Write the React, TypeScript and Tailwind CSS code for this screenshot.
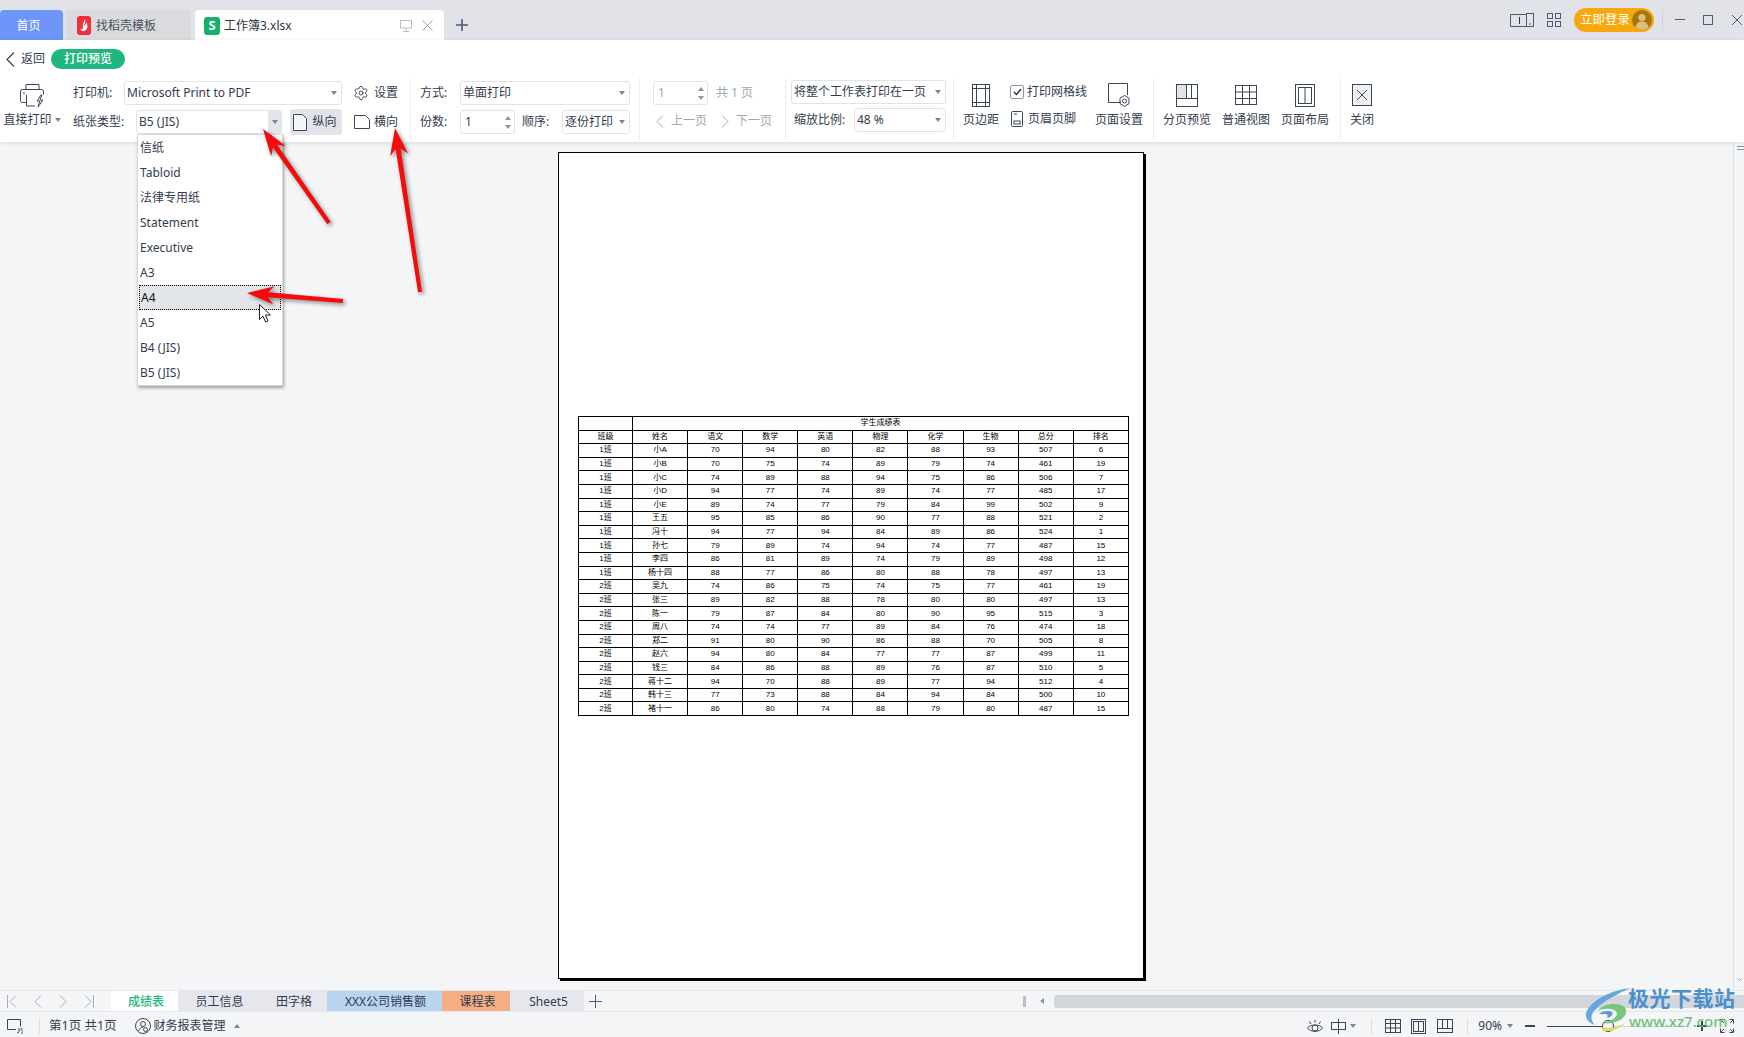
import { ChevronDown, Settings } from "lucide-react";
import type { ReactNode } from "react";

const font = '"Noto Sans", "Noto Sans CJK SC", sans-serif';

const rows = [
  ["1班", "小A", "70", "94", "80", "82", "88", "93", "507", "6"],
  ["1班", "小B", "70", "75", "74", "89", "79", "74", "461", "19"],
  ["1班", "小C", "74", "89", "88", "94", "75", "86", "506", "7"],
  ["1班", "小D", "94", "77", "74", "89", "74", "77", "485", "17"],
  ["1班", "小E", "89", "74", "77", "79", "84", "99", "502", "9"],
  ["1班", "王五", "95", "85", "86", "90", "77", "88", "521", "2"],
  ["1班", "冯十", "94", "77", "94", "84", "89", "86", "524", "1"],
  ["1班", "孙七", "79", "89", "74", "94", "74", "77", "487", "15"],
  ["1班", "李四", "86", "81", "89", "74", "79", "89", "498", "12"],
  ["1班", "杨十四", "88", "77", "86", "80", "88", "78", "497", "13"],
  ["2班", "吴九", "74", "86", "75", "74", "75", "77", "461", "19"],
  ["2班", "张三", "89", "82", "88", "78", "80", "80", "497", "13"],
  ["2班", "陈一", "79", "87", "84", "80", "90", "95", "515", "3"],
  ["2班", "周八", "74", "74", "77", "89", "84", "76", "474", "18"],
  ["2班", "郑二", "91", "80", "90", "86", "88", "70", "505", "8"],
  ["2班", "赵六", "94", "80", "84", "77", "77", "87", "499", "11"],
  ["2班", "钱三", "84", "86", "88", "89", "76", "87", "510", "5"],
  ["2班", "蒋十二", "94", "70", "88", "89", "77", "94", "512", "4"],
  ["2班", "韩十三", "77", "73", "88", "84", "94", "84", "500", "10"],
  ["2班", "褚十一", "86", "80", "74", "88", "79", "80", "487", "15"],
];

const headers = ["班级", "姓名", "语文", "数学", "英语", "物理", "化学", "生物", "总分", "排名"];
const paperSizes = ["信纸", "Tabloid", "法律专用纸", "Statement", "Executive", "A3", "A4", "A5", "B4 (JIS)", "B5 (JIS)"];

function Caret({ className = "" }: { className?: string }) {
  return <span className={`inline-block h-0 w-0 border-x-[3px] border-t-[4px] border-x-transparent border-t-[#7b8494] ${className}`} />;
}

function Select({ width, text, muted }: { width: string; text: string; muted?: boolean }) {
  return (
    <div className={`flex h-[24px] items-center justify-between rounded-[3px] border border-[#dfe2e7] bg-white pl-[2px] pr-[4px] ${width}`}>
      <span className={`whitespace-nowrap ${muted ? "text-[#a0a6b1]" : ""}`}>{text}</span>
      <Caret />
    </div>
  );
}

function Spinner({ width, text, muted }: { width: string; text: string; muted?: boolean }) {
  return (
    <div className={`flex h-[24px] items-center justify-between rounded-[3px] border border-[#dfe2e7] bg-white pl-[4px] pr-[3px] ${width} ${muted ? "text-[#a0a6b1]" : ""}`}>
      <span>{text}</span>
      <span className="flex flex-col gap-[5px]">
        <span className="h-0 w-0 border-x-[3px] border-b-[4px] border-x-transparent border-b-[#8e95a1]" />
        <span className="h-0 w-0 border-x-[3px] border-t-[4px] border-x-transparent border-t-[#8e95a1]" />
      </span>
    </div>
  );
}

function Divider() {
  return <div className="mt-[2px] h-[62px] w-px shrink-0 bg-[#edeef1]" />;
}

function Line({ size = 24, w, h, children }: { size?: number; w?: number; h?: number; children: ReactNode }) {
  return (
    <svg width={w ?? size} height={h ?? size} viewBox={`0 0 ${w ?? size} ${h ?? size}`} fill="none" stroke="#3b4558" strokeWidth="1">
      {children}
    </svg>
  );
}

function BigTool({ width, label, icon }: { width: string; label: string; icon: ReactNode }) {
  return (
    <div className={`flex shrink-0 flex-col items-center pt-[7px] ${width}`}>
      <div className="flex h-[24px] items-center justify-center">{icon}</div>
      <span className="mt-[3px] whitespace-nowrap leading-[20px]">{label}</span>
    </div>
  );
}

function Arrow({ x1, y1, x2, y2 }: { x1: number; y1: number; x2: number; y2: number }) {
  const len = Math.hypot(x2 - x1, y2 - y1);
  const ux = (x2 - x1) / len;
  const uy = (y2 - y1) / len;
  const nx = -uy;
  const ny = ux;
  const bx = x2 - ux * 27;
  const by = y2 - uy * 27;
  const nk = x2 - ux * 21;
  const nl = y2 - uy * 21;
  const pts = [
    [x2, y2],
    [bx + nx * 9, by + ny * 9],
    [nk + nx * 2.5, nl + ny * 2.5],
    [x1 + nx * 2, y1 + ny * 2],
    [x1 - nx * 2, y1 - ny * 2],
    [nk - nx * 2.5, nl - ny * 2.5],
    [bx - nx * 9, by - ny * 9],
  ];
  return <polygon points={pts.map((p) => p.join(",")).join(" ")} fill="#f40c0c" />;
}

function SheetTab({ width, label, className }: { width: string; label: string; className: string }) {
  return <div className={`flex h-full shrink-0 items-center justify-center pt-[1px] ${width} ${className}`}>{label}</div>;
}

export default function App() {
  return (
    <div className="relative flex h-[1037px] w-[1744px] flex-col overflow-hidden bg-[#f4f5f7] text-[12px] text-[#333c4e]" style={{ fontFamily: font }}>
      {/* title bar */}
      <div className="flex h-[40px] shrink-0 items-end bg-[#e1e3e8]">
        <div className="flex h-[30px] w-[63px] items-center justify-center rounded-t-[4px] bg-[#6c96f8] pr-[6px] pt-[1px] text-white">首页</div>
        <div className="ml-[3px] flex h-[30px] w-[125px] items-center rounded-t-[4px] bg-[#d9dbdf] pl-[11px] pt-[1px]">
          <span className="flex h-[19px] w-[14px] items-center justify-center rounded-[3px] bg-[#ef2f3c]">
            <svg width="10" height="13" viewBox="0 0 10 13" fill="#fff"><path d="M6 0c1 3-1 5-1 7 1-1 2-2 2-4 2 3 2 6 0 8-2 2-5 1-6-1 2 1 3 0 3-2C3 6 5 3 6 0z" /></svg>
          </span>
          <span className="ml-[5px] text-[#4a5160]">找稻壳模板</span>
        </div>
        <div className="ml-[4px] flex h-[30px] w-[249px] items-center rounded-t-[4px] bg-white pl-[9px] pt-[1px]">
          <span className="flex h-[18px] w-[16px] items-center justify-center rounded-[3px] bg-[#17b26a] text-[13px] font-bold leading-none text-white">S</span>
          <span className="ml-[4px] text-[#2b3242]">工作簿3.xlsx</span>
          <span className="ml-auto mr-[11px] flex items-center gap-[10px]">
            <svg width="12" height="13" viewBox="0 0 12 13" fill="none" stroke="#b9bec7"><rect x="0.5" y="1.5" width="11" height="7.5" /><path d="M6 9v3M3 12.5h6" /></svg>
            <svg width="11" height="11" viewBox="0 0 11 11" fill="none" stroke="#9aa0ab"><path d="M.5.5l10 10M10.5.5l-10 10" /></svg>
          </span>
        </div>
        <div className="flex h-[30px] w-[36px] items-center justify-center">
          <svg width="12" height="12" viewBox="0 0 12 12" stroke="#4e5a76" strokeWidth="1.6"><path d="M6 0v12M0 6h12" /></svg>
        </div>
        <div className="ml-auto flex h-[40px] items-center">
          <svg width="24" height="14" viewBox="0 0 24 14" fill="none" stroke="#4e5a76">
            <path d="M16 1.5H.5v12H16" /><rect x="16.5" y=".5" width="7" height="13" /><path d="M19 11h2" /><path d="M9.5 4v7" stroke="#333" />
          </svg>
          <svg className="ml-[13px]" width="14" height="14" viewBox="0 0 14 14" fill="none" stroke="#4e5a76">
            <rect x=".5" y=".5" width="5" height="5" /><rect x="8.5" y=".5" width="5" height="5" /><rect x=".5" y="8.5" width="5" height="5" /><rect x="8.5" y="8.5" width="5" height="5" />
          </svg>
          <div className="ml-[13px] flex h-[24px] w-[80px] items-center justify-between rounded-full bg-[#f7a80c] pl-[6px] pr-[2px] text-[12.5px] text-white">
            <span>立即登录</span>
            <svg width="20" height="20" viewBox="0 0 20 20">
              <circle cx="10" cy="10" r="10" fill="#a87405" />
              <circle cx="10" cy="7.5" r="3.6" fill="#dcbf83" />
              <path d="M3.5 17c.8-4 3.5-5.5 6.5-5.5s5.700 1.500 6.500 5.500c-3 3.500-10 3.500-13 0z" fill="#dcbf83" />
            </svg>
          </div>
          <div className="ml-[8px] h-[20px] w-px bg-[#cfd2d8]" />
          <svg className="ml-[12px]" width="10" height="10" viewBox="0 0 10 10" stroke="#4e5a76"><path d="M0 4.500h10" /></svg>
          <svg className="ml-[18px]" width="10" height="10" viewBox="0 0 10 10" fill="none" stroke="#4e5a76"><rect x=".5" y=".5" width="9" height="9" /></svg>
          <svg className="ml-[19px] mr-[2px]" width="10" height="10" viewBox="0 0 10 10" stroke="#4e5a76"><path d="M0 0l10 10M10 0L0 10" /></svg>
        </div>
      </div>

      {/* ribbon */}
      <div className="z-10 flex h-[102px] shrink-0 flex-col bg-white shadow-[0_1px_4px_rgba(0,0,0,0.12)]">
        <div className="flex h-[36px] shrink-0 items-center pl-[6px] pt-[2px]">
          <svg width="9" height="15" viewBox="0 0 9 15" fill="none" stroke="#3b4558" strokeWidth="1.2"><path d="M8 .5L1 7.500l7 7" /></svg>
          <span className="ml-[6px]">返回</span>
          <span className="ml-[6px] flex h-[20px] w-[74px] items-center justify-center rounded-full bg-[#1fb77e] font-medium text-white">打印预览</span>
        </div>
        <div className="flex h-[66px] items-start">
          <div className="flex w-[64px] shrink-0 flex-col items-center pt-[6px]">
            <svg width="26" height="26" viewBox="0 0 26 26" fill="none" stroke="#3b4558">
              <path d="M7 7V2.500h13V7" /><path d="M7 20.500H3.500a2 2 0 0 1-2-2v-9a2 2 0 0 1 2-2h19a2 2 0 0 1 2 2v3" /><path d="M7.500 13v11H16" /><path d="M4 11h2" /><path d="M22 13l-4 6h3l-2 6 5-7h-3l2-5z" strokeLinejoin="round" />
            </svg>
            <span className="mt-[2px] flex items-center gap-[3px] whitespace-nowrap leading-[20px]">直接打印<Caret /></span>
          </div>
          <div className="flex w-[346px] shrink-0 flex-col gap-[5px] pl-[9px] pt-[5px]">
            <div className="flex h-[24px] items-center">
              <span className="w-[51px] shrink-0">打印机:</span>
              <Select width="w-[218px]" text="Microsoft Print to PDF" />
              <Settings size={16} strokeWidth={1.4} className="ml-[11px] text-[#3b4558]" />
              <span className="ml-[5px]">设置</span>
            </div>
            <div className="flex h-[24px] items-center">
              <span className="w-[63px] shrink-0">纸张类型:</span>
              <div className="flex h-[24px] w-[146px] items-center justify-between rounded-[3px] border border-[#dfe2e7] bg-white pl-[2px]">
                <span>B5 (JIS)</span>
                <span className="flex h-full w-[13px] items-center justify-center bg-[#e2e5ea]"><Caret /></span>
              </div>
              <div className="ml-[8px] flex h-[26px] w-[52px] items-center justify-center gap-[5px] rounded-[3px] bg-[#e1e4e9] pr-[2px]">
                <svg width="14" height="17" viewBox="0 0 14 17" fill="#f4f5f7" stroke="#3b4558"><path d="M.5.500h9l4 4v12H.5z" /></svg>
                <span>纵向</span>
              </div>
              <svg className="ml-[12px]" width="16" height="14" viewBox="0 0 16 14" fill="none" stroke="#3b4558"><path d="M.5.500h11l4 4v9H.5z" /></svg>
              <span className="ml-[4px]">横向</span>
            </div>
          </div>
          <Divider />
          <div className="flex w-[228px] shrink-0 flex-col gap-[5px] pl-[9px] pt-[5px]">
            <div className="flex h-[24px] items-center">
              <span className="w-[40px] shrink-0">方式:</span>
              <Select width="w-[170px]" text="单面打印" />
            </div>
            <div className="flex h-[24px] items-center">
              <span className="w-[40px] shrink-0">份数:</span>
              <Spinner width="w-[55px]" text="1" />
              <span className="ml-[7px] w-[40px] shrink-0">顺序:</span>
              <Select width="w-[68px]" text="逐份打印" />
            </div>
          </div>
          <Divider />
          <div className="flex w-[145px] shrink-0 flex-col gap-[4px] pl-[13px] pt-[5px] text-[#a0a6b1]">
            <div className="flex h-[24px] items-center">
              <Spinner width="w-[55px]" text="1" muted />
              <span className="ml-[8px] whitespace-nowrap">共 1 页</span>
            </div>
            <div className="flex h-[24px] items-center pl-[3px]">
              <svg width="8" height="13" viewBox="0 0 8 13" fill="none" stroke="#a0a6b1"><path d="M7 .500l-6 6 6 6" /></svg>
              <span className="ml-[7px]">上一页</span>
              <svg className="ml-[14px]" width="8" height="13" viewBox="0 0 8 13" fill="none" stroke="#a0a6b1"><path d="M1 .500l6 6-6 6" /></svg>
              <span className="ml-[7px]">下一页</span>
            </div>
          </div>
          <Divider />
          <div className="flex w-[167px] shrink-0 flex-col gap-[4px] pl-[5px] pt-[4px]">
            <Select width="w-[155px]" text="将整个工作表打印在一页" />
            <div className="flex h-[24px] items-center">
              <span className="ml-[3px] w-[60px] shrink-0">缩放比例:</span>
              <Select width="w-[92px]" text="48 %" />
            </div>
          </div>
          <Divider />
          <BigTool
            width="w-[54px]"
            label="页边距"
            icon={
              <Line w={18} h={23}>
                <rect x=".5" y=".5" width="17" height="22" /><path d="M4.500 0v23M13.500 0v23M0 4.500h18M0 18.500h18" />
              </Line>
            }
          />
          <div className="ml-[2px] flex w-[85px] shrink-0 flex-col gap-[9px] pt-[7px]">
            <div className="flex h-[18px] items-center">
              <span className="flex h-[14px] w-[14px] items-center justify-center rounded-[2px] border border-[#8f96a3] bg-white">
                <svg width="9" height="8" viewBox="0 0 9 8" fill="none" stroke="#2b3242" strokeWidth="1.500"><path d="M1 4l2.500 2.500L8 1" /></svg>
              </span>
              <span className="ml-[3px] whitespace-nowrap">打印网格线</span>
            </div>
            <div className="flex h-[18px] items-center">
              <svg width="14" height="16" viewBox="0 0 14 16" fill="none" stroke="#3b4558"><rect x="1.500" y=".5" width="11" height="15" rx="1" /><path d="M4 3h3" /><rect x="4" y="10" width="6" height="3" /></svg>
              <span className="ml-[4px] whitespace-nowrap">页眉页脚</span>
            </div>
          </div>
          <BigTool
            width="w-[58px] pr-[10px]"
            label="页面设置"
            icon={
              <Line w={24} h={26}>
                <path d="M14 20.500H1.500V1.500h19V13" /><circle cx="17.500" cy="19" r="2" /><path d="M17.500 13.500l4.500 2.700v5.500l-4.500 2.700-4.500-2.700v-5.500z" />
              </Line>
            }
          />
          <Divider />
          <BigTool
            width="w-[66px]"
            label="分页预览"
            icon={
              <Line w={22} h={23}>
                <rect x=".5" y=".5" width="21" height="22" /><rect x="1" y="1" width="9" height="13" fill="#e2e4e8" stroke="none" /><path d="M10.500 0v14.500M15.500 0v14.500M0 14.500h22" />
              </Line>
            }
          />
          <BigTool
            width="w-[44px] ml-[4px]"
            label="普通视图"
            icon={
              <Line w={22} h={20}>
                <rect x=".5" y=".5" width="21" height="19" /><path d="M7.500 0v20M14.500 0v20M0 7h22M0 13.500h22" />
              </Line>
            }
          />
          <BigTool
            width="w-[60px] ml-[7px]"
            label="页面布局"
            icon={
              <Line w={20} h={23}>
                <rect x=".5" y=".5" width="19" height="22" /><rect x="3.500" y="3.500" width="13" height="16" /><path d="M10 3v17" />
              </Line>
            }
          />
          <div className="w-[5px] shrink-0" />
          <Divider />
          <BigTool
            width="w-[42px]"
            label="关闭"
            icon={
              <Line w={20} h={22}>
                <rect x=".5" y=".5" width="19" height="21" fill="#eef0f3" /><path d="M5 6l10 10M15 6L5 16" />
              </Line>
            }
          />
        </div>
      </div>

      {/* sheet preview */}
      <div className="flex min-h-0 flex-1">
        <div className="flex-1 pl-[558px] pt-[10px]">
          <div className="h-[827px] w-[586px] border border-black bg-white pl-[19px] pt-[263px] shadow-[2px_2px_0_#000]">
            <table className="w-[551px] table-fixed border-collapse border-[1.5px] border-black text-center text-[8px] leading-none text-black" style={{ fontFamily: '"Liberation Sans", "Noto Sans CJK SC", sans-serif' }}>
              <colgroup>
                {headers.map((h, i) => (
                  <col key={h} className={i === 0 ? "w-[54px]" : "w-[55px]"} />
                ))}
              </colgroup>
              <tbody>
                <tr className="h-[13.6px]">
                  <td className="border border-black p-0" />
                  <td colSpan={9} className="border border-black p-0">学生成绩表</td>
                </tr>
                <tr className="h-[13.6px]">
                  {headers.map((h) => (
                    <td key={h} className="border border-black p-0">{h}</td>
                  ))}
                </tr>
                {rows.map((row) => (
                  <tr key={row[1]} className="h-[13.6px]">
                    {row.map((cell, i) => (
                      <td key={i} className="border border-black p-0">{cell}</td>
                    ))}
                  </tr>
                ))}
              </tbody>
            </table>
          </div>
        </div>
        <div className="relative w-[11px] shrink-0 border-l border-[#dfe1e6]">
          <div className="ml-[3px] mt-[4px] h-[4px] w-[8px] border-y border-[#8b93a1]" />
          <ChevronDown size={9} className="absolute bottom-[6px] left-[1px] text-[#8b93a1]" />
        </div>
      </div>

      {/* sheet tabs */}
      <div className="flex h-[22px] shrink-0 items-center border-y border-[#e5e7ec] bg-[#f4f5f7]">
        <div className="flex w-[111px] shrink-0 items-center gap-[17px] pl-[7px]">
          <svg width="10" height="13" viewBox="0 0 10 13" fill="none" stroke="#a8adb7"><path d="M.5 0v13M9 .5l-6 6 6 6" /></svg>
          <svg width="8" height="13" viewBox="0 0 8 13" fill="none" stroke="#a8adb7"><path d="M7 .5l-6 6 6 6" /></svg>
          <svg width="8" height="13" viewBox="0 0 8 13" fill="none" stroke="#a8adb7"><path d="M1 .5l6 6-6 6" /></svg>
          <svg width="10" height="13" viewBox="0 0 10 13" fill="none" stroke="#a8adb7"><path d="M9.500 0v13M1 .5l6 6-6 6" /></svg>
        </div>
        <SheetTab width="w-[67px] pl-[3px]" label="成绩表" className="bg-white font-medium text-[#1fb77e]" />
        <SheetTab width="w-[83px]" label="员工信息" className="bg-[#e5e7ec]" />
        <SheetTab width="w-[66px]" label="田字格" className="bg-[#e5e7ec]" />
        <SheetTab width="w-[115px] pl-[2px]" label="XXX公司销售额" className="bg-[#b8d4ee]" />
        <SheetTab width="w-[68px] pl-[3px]" label="课程表" className="bg-[#f4ae82]" />
        <SheetTab width="w-[74px] pl-[3px]" label="Sheet5" className="bg-[#e5e7ec]" />
        <div className="flex w-[22px] justify-center">
          <svg width="13" height="13" viewBox="0 0 13 13" stroke="#4e5a76"><path d="M6.500 0v13M0 6.500h13" /></svg>
        </div>
        <div className="ml-[417px] h-[11px] w-[3px] bg-[#b9bec7]" />
        <span className="ml-[14px] h-0 w-0 border-y-[3px] border-r-[4px] border-y-transparent border-r-[#8b93a1]" />
        <div className="ml-[10px] h-[13px] flex-1 rounded-l-[3px] bg-[#d3d6dd]" />
      </div>

      {/* status bar */}
      <div className="flex h-[25px] shrink-0 items-center bg-[#f4f5f7] pt-[3px]">
        <svg className="ml-[7px]" width="16" height="16" viewBox="0 0 16 16" fill="none" stroke="#3b4558"><path d="M9 11.500H.5V1.500h13v7" /><path d="M10 15c1.500 0 2-.5 2-2v-3M15.500 10.500c-2-.5-2 2 0 2.500s0 3-1.500 2" /></svg>
        <div className="ml-[16px] h-[16px] w-px bg-[#dcdfe4]" />
        <span className="ml-[9px] whitespace-nowrap text-[12.5px]">第1页 共1页</span>
        <svg className="ml-[18px]" width="16" height="18" viewBox="0 0 16 18" fill="none" stroke="#3b4558"><circle cx="8" cy="9" r="7.500" /><circle cx="8" cy="7" r="2.500" /><path d="M3.500 14c1-2.500 2.500-3.500 4.500-3.500" /><circle cx="10.500" cy="12.500" r="2" /></svg>
        <span className="ml-[3px] whitespace-nowrap">财务报表管理</span>
        <span className="ml-[8px] h-0 w-0 border-x-[3px] border-b-[4px] border-x-transparent border-b-[#7b8494]" />

        <svg className="ml-auto" width="16" height="15" viewBox="0 0 16 15" fill="none" stroke="#3b4558"><path d="M.5 9C3 5 13 5 15.500 9 13 13.500 3 13.500.5 9z" /><circle cx="8" cy="9" r="3" /><path d="M8 1v2.500M2.500 2.500l1.500 2.500M13.500 2.500L12 5" /></svg>
        <svg className="ml-[8px]" width="15" height="15" viewBox="0 0 15 15" fill="none" stroke="#3b4558"><rect x=".5" y="3.500" width="14" height="7" /><path d="M7.500 0v15" /></svg>
        <Caret className="ml-[4px]" />
        <div className="ml-[15px] h-[16px] w-px bg-[#dcdfe4]" />
        <svg className="ml-[13px]" width="16" height="14" viewBox="0 0 16 14" fill="none" stroke="#3b4558"><rect x=".5" y=".5" width="15" height="13" /><path d="M5.500 0v14M10.500 0v14M0 4.500h16M0 9h16" /></svg>
        <svg className="ml-[10px]" width="15" height="15" viewBox="0 0 15 15" fill="none" stroke="#3b4558"><rect x=".5" y=".5" width="14" height="14" /><rect x="2.500" y="2.500" width="10" height="10" /><path d="M7.500 2v11" /></svg>
        <svg className="ml-[11px]" width="16" height="14" viewBox="0 0 16 14" fill="none" stroke="#3b4558"><rect x=".5" y=".5" width="15" height="13" /><path d="M5.500 0v9M10.500 0v9M0 9.500h16" /></svg>
        <div className="ml-[14px] h-[16px] w-px bg-[#dcdfe4]" />
        <span className="ml-[10px]">90%</span>
        <Caret className="ml-[5px]" />
        <div className="ml-[12px] h-[2px] w-[10px] bg-[#3b4558]" />
        <div className="ml-[12px] flex w-[142px] items-center">
          <div className="h-px w-[55px] bg-[#3b4558]" />
          <div className="h-[12px] w-[12px] shrink-0 rounded-full border border-[#3b4558] bg-[#f4f5f7]" />
          <div className="h-px flex-1 bg-[#cfd2d8]" />
        </div>
        <svg className="ml-[8px]" width="10" height="10" viewBox="0 0 10 10" stroke="#3b4558" strokeWidth="2"><path d="M5 0v10M0 5h10" /></svg>
        <svg className="ml-[13px] mr-[10px]" width="14" height="14" viewBox="0 0 14 14" fill="none" stroke="#3b4558"><path d="M4.500.5h-4v4M9.500.5h4v4M.5 9.500v4h4M13.500 9.500v4h-4M1 1l3 3M13 1l-3 3M1 13l3-3M13 13l-3-3" /></svg>
      </div>

      {/* paper size dropdown */}
      <div className="absolute left-[137px] top-[134px] z-20 flex h-[252px] w-[146px] flex-col border border-[#d5d8dd] bg-white shadow-[1px_2px_3px_rgba(0,0,0,0.35)]">
        {paperSizes.map((size) => (
          <div
            key={size}
            className={`mx-px flex h-[25px] items-center pl-[1px] ${size === "A4" ? "border border-dotted border-black bg-[#e2e5ea] text-[#111]" : ""}`}
          >
            {size}
          </div>
        ))}
      </div>

      {/* annotations */}
      <svg className="pointer-events-none absolute left-0 top-0 z-30 [filter:drop-shadow(2px_2px_2px_rgba(0,0,0,0.45))]" width="1744" height="1037">
        <Arrow x1={329} y1={223} x2={263} y2={129} />
        <Arrow x1={420} y1={292} x2={395} y2={128} />
        <Arrow x1={343} y1={301} x2={247} y2={293} />
      </svg>
      <svg className="pointer-events-none absolute left-[259px] top-[304px] z-30" width="13" height="19" viewBox="0 0 13 19" fill="#fff" stroke="#222">
        <path d="M.5.500v15l3.500-3.500 2.500 6 2.500-1-2.500-6h5z" />
      </svg>

      {/* watermark */}
      <div className="pointer-events-none absolute left-[1585px] top-[987px] z-30 h-[48px] w-[155px]">
        <svg className="absolute left-0 top-0" width="48" height="46" viewBox="0 0 48 46" fill="none">
          <path d="M46 1C28 3 6 12 1 26c-1 6 3 10 9 12-5-5-5-11 2-17C20 13 34 6 46 1z" fill="#5aa0dc" opacity="0.9" />
          <path d="M12 24c6-7 18-9 26-5 5 3 4 10-3 14-6 3-13 4-19 3 8-1 15-4 16-9 0-5-11-7-20-3z" fill="#6cc26e" opacity="0.9" />
          <path d="M14 27c3-3 10-4 13-2 2 2-1 5-5 6 1-2 1-3-1-4-2 0-5 0-7 0z" fill="#4d8fd0" opacity="0.9" />
          <path d="M16 40c8 2 18 0 24-4-5 6-14 9-22 8z" fill="#e2d95a" opacity="0.9" />
        </svg>
        <span className="absolute left-[43px] top-[-2px] whitespace-nowrap text-[21px] font-bold leading-[26px] tracking-[0.5px] text-[#4b90cb]">极光下载站</span>
        <span className="absolute left-[44px] top-[25px] whitespace-nowrap text-[15px] font-medium leading-[18px] text-[#6cc27a]">www.xz7.com</span>
      </div>
    </div>
  );
}
